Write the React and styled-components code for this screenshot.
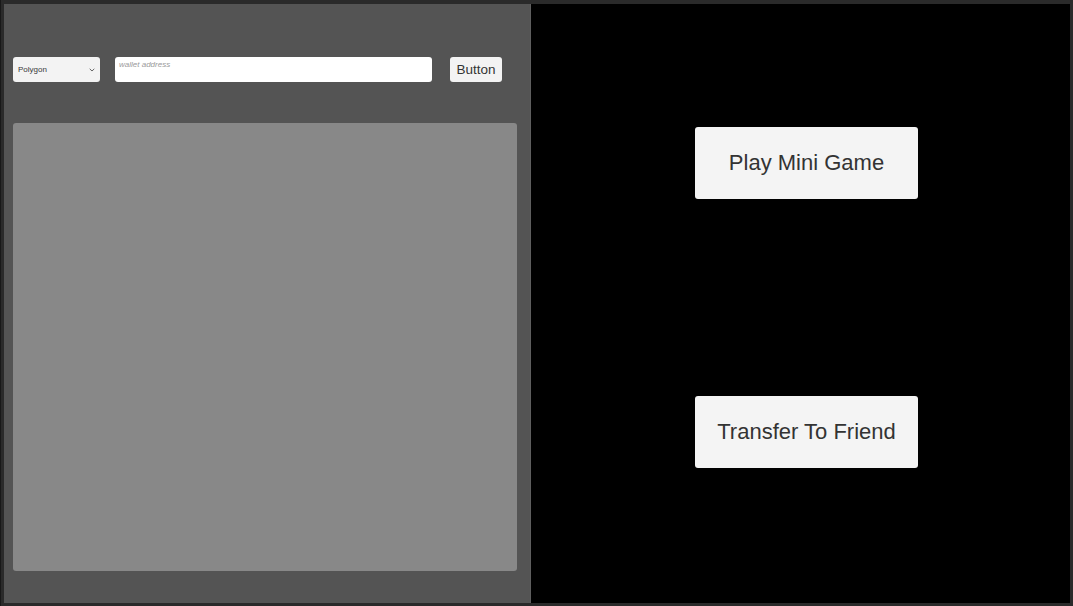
import React from 'react'
import styled, { createGlobalStyle } from 'styled-components'

const GlobalStyle = createGlobalStyle`
html, body {
margin: 0;
padding: 0;
background: #282828;
font-family: 'Liberation Sans', Arial, sans-serif;
}
`

const Frame = styled.div`
width: 1073px;
height: 606px;
box-sizing: border-box;
padding: 4px 3px 3px 3px;
background: #2a2a2a;
border-left: 1px solid #181818;
display: flex;
`

const LeftPanel = styled.div`
width: 527px;
flex-shrink: 0;
background: #545454;
border-right: 1px solid #5e5e5e;
box-sizing: border-box;
padding: 53px 13px 32px 9px;
display: flex;
flex-direction: column;
`

const Toolbar = styled.div`
display: flex;
align-items: flex-start;
height: 25px;
`

const Dropdown = styled.div`
width: 87px;
height: 25px;
box-sizing: border-box;
background: #f3f3f3;
border-radius: 3px;
display: flex;
align-items: center;
justify-content: space-between;
padding: 0 5px 0 5px;
font-size: 8px;
color: #3a3a3a;
`

const Chevron = styled.svg`
width: 6px;
height: 4px;
`

const AddressInput = styled.div`
width: 317px;
height: 25px;
margin-left: 15px;
box-sizing: border-box;
background: #ffffff;
border-radius: 3px;
padding: 3px 4px;
font-size: 8px;
font-style: italic;
color: #9a9a9a;
`

const SmallButton = styled.div`
width: 52px;
height: 25px;
margin-left: 18px;
background: #f3f3f3;
border-radius: 3px;
display: flex;
align-items: center;
justify-content: center;
font-size: 13.5px;
color: #333;
`

const Viewport = styled.div`
margin-top: 41px;
flex: 1;
width: 504px;
background: #888888;
border-radius: 3px;
`

const RightPanel = styled.div`
flex: 1;
background: #000;
display: flex;
flex-direction: column;
padding: 123px 0 0 164px;
gap: 197px;
`

const BigButton = styled.div`
width: 223px;
height: 72px;
background: #f4f4f4;
border-radius: 3px;
display: flex;
align-items: center;
justify-content: center;
font-size: 22px;
color: #333;
`

export default function App() {
  return (
    <>
      <GlobalStyle />
      <Frame>
        <LeftPanel>
          <Toolbar>
            <Dropdown>
              <span>Polygon</span>
              <Chevron viewBox="0 0 6 4">
                <path d="M0.7 0.8 L3 3 L5.3 0.8" fill="none" stroke="#555" strokeWidth="0.9" />
              </Chevron>
            </Dropdown>
            <AddressInput>wallet address</AddressInput>
            <SmallButton>Button</SmallButton>
          </Toolbar>
          <Viewport />
        </LeftPanel>
        <RightPanel>
          <BigButton>Play Mini Game</BigButton>
          <BigButton>Transfer To Friend</BigButton>
        </RightPanel>
      </Frame>
    </>
  )
}
